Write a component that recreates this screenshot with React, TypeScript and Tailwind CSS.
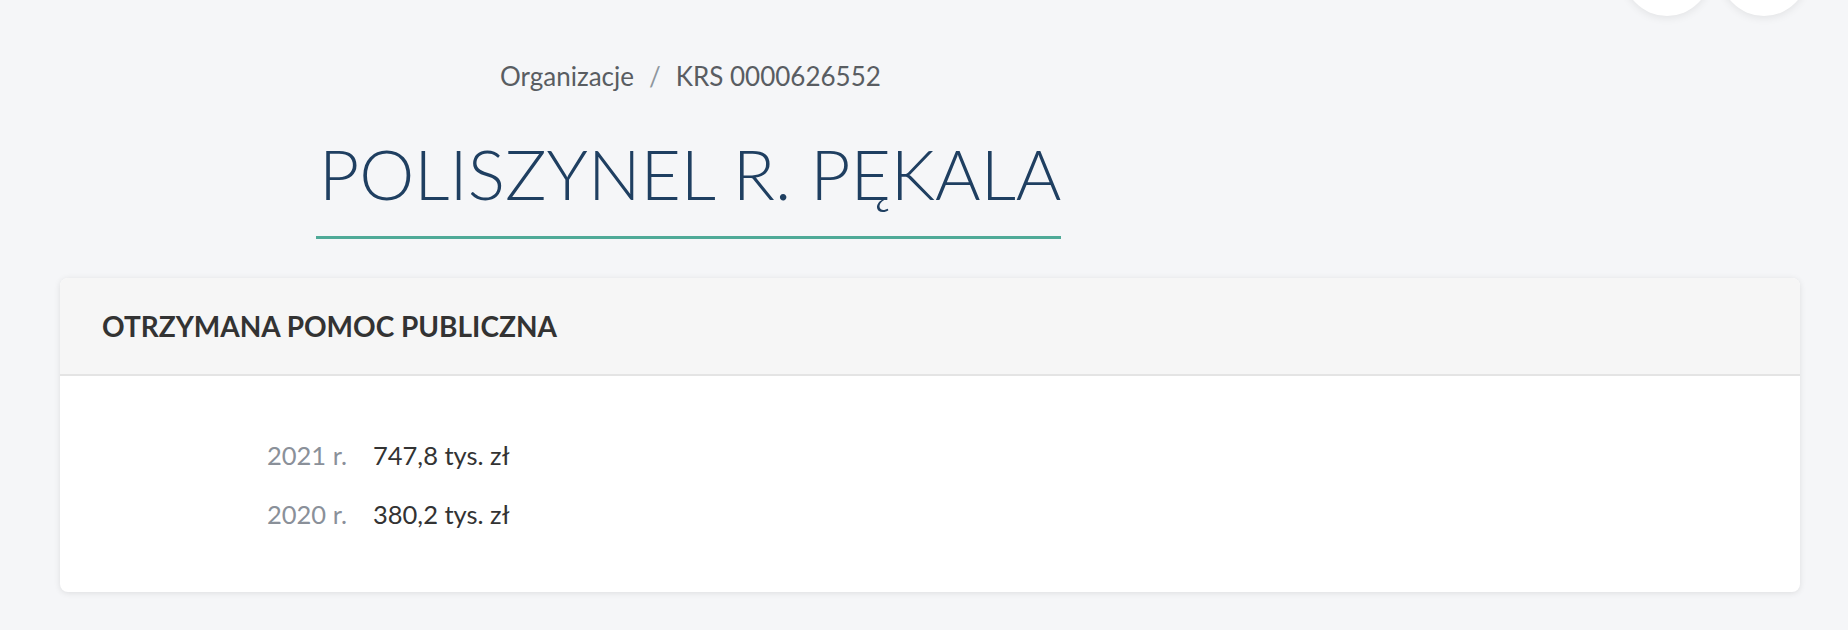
import React from "react";

const rows = [
  { year: "2021 r.", value: "747,8 tys. zł" },
  { year: "2020 r.", value: "380,2 tys. zł" },
];

export default function App() {
  return (
    <div className="min-h-screen overflow-hidden bg-[#f5f6f8] font-['Lato',sans-serif]">
      {/* top-right round buttons, cut off by the viewport */}
      <div className="-mt-[72px] flex justify-end gap-[9px] pr-[40px]">
        <button className="h-[88px] w-[88px] rounded-full bg-white shadow-[0_2px_8px_rgba(0,0,0,0.08)]" />
        <button className="h-[88px] w-[88px] rounded-full bg-white shadow-[0_2px_8px_rgba(0,0,0,0.08)]" />
      </div>

      {/* Breadcrumb */}
      <nav className="mt-[40px] pl-[500px]">
        <ol className="flex items-center text-[26px] leading-[40px] text-[#595d62]">
          <li>Organizacje</li>
          <li className="mx-[15px] text-[#8e969e]">/</li>
          <li>KRS 0000626552</li>
        </ol>
      </nav>

      {/* Title */}
      <div className="mt-[42px] pl-[316px]">
        <h1 className="inline-block border-b-[3px] border-[#4faa98] pl-[3px] pb-[28px] text-[69.6px] font-light leading-[70px] text-[#1f3f61]">
          POLISZYNEL R. PĘKALA
        </h1>
      </div>

      {/* Card */}
      <section className="mt-[39px] ml-[60px] w-[1740px] overflow-hidden rounded-lg bg-white shadow-[0_1px_6px_rgba(0,0,0,0.1)]">
        <header className="flex h-[98px] items-center border-b-2 border-[#e4e4e4] bg-[#f6f6f6] px-[42px]">
          <h2 className="text-[28px] font-bold text-[#333]">OTRZYMANA POMOC PUBLICZNA</h2>
        </header>
        <dl className="grid grid-cols-[106px_1fr] gap-y-[19px] pt-[59px] pb-[58px] pl-[207px] text-[25.5px] leading-[40px]">
          {rows.map((r) => (
            <React.Fragment key={r.year}>
              <dt className="text-[#8a9099]">{r.year}</dt>
              <dd className="text-[#333]">{r.value}</dd>
            </React.Fragment>
          ))}
        </dl>
      </section>
    </div>
  );
}
